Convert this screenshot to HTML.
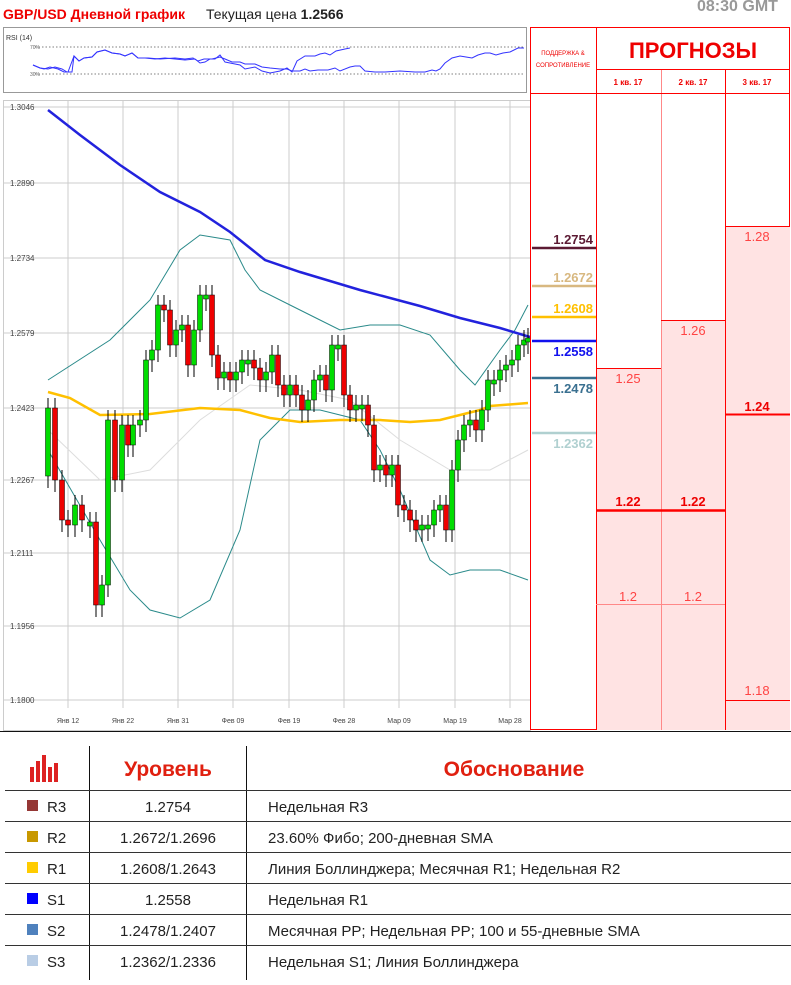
<!DOCTYPE html>
<html><head><meta charset="utf-8"><style>
body{margin:0;width:791px;height:985px;background:#fff;font-family:"Liberation Sans",sans-serif;position:relative;overflow:hidden}
.a{position:absolute}
.gl{font-size:8px;color:#555}
.rp{position:absolute;border:1px solid #f00;box-sizing:border-box}
td{border-bottom:1px solid #222;}
</style></head><body>
<div class="a" style="left:3px;top:6px;font-size:14px;font-weight:bold;color:#e00">GBP/USD Дневной график</div>
<div class="a" style="left:206px;top:6px;font-size:14px;color:#222">Текущая цена <b>1.2566</b></div>
<div class="a" style="left:697px;top:-2px;font-size:16px;font-weight:bold;color:#999">08:30 GMT</div>

<svg class="a" style="left:0;top:0" width="791" height="985">
<!-- RSI box -->
<rect x="3.5" y="27.5" width="523" height="65" fill="#fff" stroke="#999"/>
<text x="6" y="40" font-size="7" fill="#333">RSI (14)</text>
<line x1="35" y1="47" x2="524" y2="47" stroke="#555" stroke-dasharray="1.5,2" stroke-width="0.7"/>
<line x1="35" y1="74" x2="524" y2="74" stroke="#555" stroke-dasharray="1.5,2" stroke-width="0.7"/>
<text x="30" y="49" font-size="5" fill="#666">70%</text><text x="30" y="76" font-size="5" fill="#666">30%</text>
<polyline fill="none" stroke="#33f" stroke-width="1" points="33,65 40,68 48,69 55,67 62,69 67,72 72,72 74,56 79,61 84,58 92,57 97,52 105,50 112,53 120,54 125,56 132,53 138,58 145,58 155,59 165,58 175,59 185,60 195,59 200,63 205,62 210,59 215,59 220,55 225,62 230,63 240,65 245,69 255,67 262,71 270,73 280,71 287,68 292,72 297,61 305,56 315,56 320,54 325,53 330,55 336,51 345,49 350,48"/>
<polyline fill="none" stroke="#33f" stroke-width="1" points="33,65 40,68 48,69 55,67 62,69 67,72 72,72 74,56 79,61 84,58 92,57 97,52 105,50 112,53 120,54 125,56 132,53 138,58 145,58 155,59 165,58 175,59 185,60 195,59 200,63 205,62 210,59 215,59 220,55 225,62 230,63 240,65 245,69 255,67 262,71 270,73 280,71 287,68 292,72 297,61 305,56 315,56 320,54 325,53 330,55 336,51 345,49 350,48" transform="translate(0,0)" opacity="0"/>
<polyline fill="none" stroke="#33f" stroke-width="1" points="33,65 40,68 44,69 50,67 58,69 64,72 68,72 74,56 79,61 84,58 92,57 97,52 105,50 112,53 120,54 125,56 132,53 138,58 148,58 160,59 175,58 185,59 193,58 198,61 204,59 212,59 220,57 225,59 232,62 240,62 245,64 255,64 262,67 270,68 280,69 287,69 292,71 300,71 305,69 310,71 318,70 328,70 335,68 340,71 350,67 355,66 360,66 365,71 375,72 385,72 400,71 415,72 425,72 432,70 436,71 440,69 445,63 452,58 460,56 466,57 472,58 478,55 485,53 490,53 496,55 503,53 510,52 518,48 524,48"/>
<!-- chart area -->
<rect x="3.5" y="100.5" width="527" height="630" fill="#fff" stroke="#ccc"/>
<g stroke="#ccc" stroke-width="1">
<line x1="4" y1="107" x2="530" y2="107"/><line x1="4" y1="183" x2="530" y2="183"/><line x1="4" y1="258" x2="530" y2="258"/><line x1="4" y1="333" x2="530" y2="333"/><line x1="4" y1="408" x2="530" y2="408"/><line x1="4" y1="480" x2="530" y2="480"/><line x1="4" y1="553" x2="530" y2="553"/><line x1="4" y1="626" x2="530" y2="626"/><line x1="4" y1="700" x2="530" y2="700"/>
<line x1="68" y1="101" x2="68" y2="708"/><line x1="123" y1="101" x2="123" y2="708"/><line x1="178" y1="101" x2="178" y2="708"/><line x1="233" y1="101" x2="233" y2="708"/><line x1="289" y1="101" x2="289" y2="708"/><line x1="344" y1="101" x2="344" y2="708"/><line x1="399" y1="101" x2="399" y2="708"/><line x1="455" y1="101" x2="455" y2="708"/><line x1="510" y1="101" x2="510" y2="708"/>
</g>
<g font-size="8" fill="#444">
<text x="10" y="110">1.3046</text><text x="10" y="186">1.2890</text><text x="10" y="261">1.2734</text><text x="10" y="336">1.2579</text><text x="10" y="411">1.2423</text><text x="10" y="483">1.2267</text><text x="10" y="556">1.2111</text><text x="10" y="629">1.1956</text><text x="10" y="703">1.1800</text>
</g>
<g font-size="7" fill="#444" text-anchor="middle">
<text x="68" y="723">Янв 12</text><text x="123" y="723">Янв 22</text><text x="178" y="723">Янв 31</text><text x="233" y="723">Фев 09</text><text x="289" y="723">Фев 19</text><text x="344" y="723">Фев 28</text><text x="399" y="723">Мар 09</text><text x="455" y="723">Мар 19</text><text x="510" y="723">Мар 28</text>
</g>
<polyline fill="none" stroke="#ddd" stroke-width="1" points="48,430 100,480 150,470 200,420 250,385 300,390 350,400 400,440 450,470 490,470 528,450"/>
<polyline fill="none" stroke="#2a8a8a" stroke-width="1" points="48,380 110,340 150,300 180,250 200,235 230,240 245,270 260,290 290,305 320,320 340,330 370,325 400,325 430,335 460,370 475,385 500,350 515,330 528,305"/>
<polyline fill="none" stroke="#2a8a8a" stroke-width="1" points="48,450 100,540 130,590 150,610 180,618 210,600 240,530 260,440 290,410 320,410 360,420 380,450 400,490 430,560 450,575 470,570 500,570 528,580"/>
<polyline fill="none" stroke="#ffc000" stroke-width="2.5" points="48,392 70,398 100,415 150,414 200,408 240,410 270,418 300,422 340,420 380,420 410,422 440,420 460,415 480,410 490,406 528,403"/>
<polyline fill="none" stroke="#2222dd" stroke-width="2.5" points="48,110 80,135 120,165 160,192 200,212 230,232 265,260 300,272 360,290 420,306 460,318 500,328 530,337"/>
<g id="cd"></g>
<!-- right panel lines -->
<rect x="530.5" y="27.5" width="259" height="702" fill="none" stroke="#f00"/>
<rect x="596" y="368" width="65" height="362" fill="#ffe3e3"/>
<rect x="661" y="320" width="64" height="410" fill="#ffe3e3"/>
<rect x="725" y="226" width="65" height="504" fill="#ffe3e3"/>
<g stroke="#f00" stroke-width="1">
<line x1="596.5" y1="27" x2="596.5" y2="730"/><line x1="661.5" y1="70" x2="661.5" y2="730" stroke="#f88"/><line x1="725.5" y1="70" x2="725.5" y2="730"/>
<line x1="530" y1="93.5" x2="790" y2="93.5"/><line x1="596" y1="69.5" x2="790" y2="69.5"/>
<line x1="596" y1="368.5" x2="661" y2="368.5"/><line x1="661" y1="320.5" x2="725" y2="320.5"/><line x1="725" y1="226.5" x2="790" y2="226.5"/>
<line x1="596" y1="604.5" x2="725" y2="604.5" stroke="#f88"/><line x1="725" y1="700.5" x2="790" y2="700.5"/>
<line x1="596" y1="510.5" x2="725" y2="510.5" stroke-width="2.5"/><line x1="725" y1="414.5" x2="790" y2="414.5" stroke-width="2"/>
</g>
<g stroke-width="2.5">
<line x1="532" y1="248" x2="596" y2="248" stroke="#5c1a33"/>
<line x1="532" y1="286" x2="596" y2="286" stroke="#d8b880"/>
<line x1="532" y1="317" x2="596" y2="317" stroke="#ffc000"/>
<line x1="532" y1="341" x2="596" y2="341" stroke="#1111ee"/>
<line x1="532" y1="378" x2="596" y2="378" stroke="#3a7090"/>
<line x1="532" y1="433" x2="596" y2="433" stroke="#b0d0d0"/>
</g>
<g font-size="13" font-weight="bold" text-anchor="end">
<text x="593" y="244" fill="#5c1a33">1.2754</text>
<text x="593" y="282" fill="#d8b880">1.2672</text>
<text x="593" y="313" fill="#ffc000">1.2608</text>
<text x="593" y="356" fill="#1111ee">1.2558</text>
<text x="593" y="393" fill="#3a7090">1.2478</text>
<text x="593" y="448" fill="#b0d0d0">1.2362</text>
</g>
<g font-size="13" text-anchor="middle" fill="#f44">
<text x="628" y="383">1.25</text><text x="693" y="335">1.26</text><text x="757" y="241">1.28</text>
<text x="628" y="601">1.2</text><text x="693" y="601">1.2</text><text x="757" y="695">1.18</text>
</g>
<g font-size="13" font-weight="bold" text-anchor="middle" fill="#e00">
<text x="628" y="506">1.22</text><text x="693" y="506">1.22</text><text x="757" y="411">1.24</text>
</g>
<text x="563" y="55" font-size="6" fill="#e00" text-anchor="middle">ПОДДЕРЖКА &amp;</text>
<text x="563" y="67" font-size="6" fill="#e00" text-anchor="middle">СОПРОТИВЛЕНИЕ</text>
<text x="693" y="58" font-size="22" font-weight="bold" fill="#e00" text-anchor="middle">ПРОГНОЗЫ</text>
<g font-size="8" font-weight="bold" fill="#e00" text-anchor="middle"><text x="628" y="85">1 кв. 17</text><text x="693" y="85">2 кв. 17</text><text x="757" y="85">3 кв. 17</text></g>
<!-- table -->
<line x1="0" y1="731.5" x2="791" y2="731.5" stroke="#111"/>
<line x1="89.5" y1="746" x2="89.5" y2="980" stroke="#111"/><line x1="246.5" y1="746" x2="246.5" y2="980" stroke="#111"/>
<g stroke="#333"><line x1="5" y1="790.5" x2="791" y2="790.5"/><line x1="5" y1="821.5" x2="791" y2="821.5"/><line x1="5" y1="852.5" x2="791" y2="852.5"/><line x1="5" y1="883.5" x2="791" y2="883.5"/><line x1="5" y1="914.5" x2="791" y2="914.5"/><line x1="5" y1="945.5" x2="791" y2="945.5"/></g>
<g fill="#d22"><rect x="30" y="767" width="4" height="15"/><rect x="36" y="761" width="4" height="21"/><rect x="42" y="755" width="4" height="27"/><rect x="48" y="767" width="4" height="15"/><rect x="54" y="763" width="4" height="19"/></g>
<text x="168" y="776" font-size="21" font-weight="bold" fill="#e02010" text-anchor="middle">Уровень</text>
<text x="514" y="776" font-size="21" font-weight="bold" fill="#e02010" text-anchor="middle">Обоснование</text>
<rect x="27" y="800" width="11" height="11" fill="#953735"/><rect x="27" y="831" width="11" height="11" fill="#c89800"/><rect x="27" y="862" width="11" height="11" fill="#ffcc00"/><rect x="27" y="893" width="11" height="11" fill="#0000ff"/><rect x="27" y="924" width="11" height="11" fill="#4f81bd"/><rect x="27" y="955" width="11" height="11" fill="#b9cde5"/>
<g font-size="15" fill="#222"><text x="47" y="812">R3</text><text x="47" y="843">R2</text><text x="47" y="874">R1</text><text x="47" y="905">S1</text><text x="47" y="936">S2</text><text x="47" y="967">S3</text></g>
<g font-size="15" fill="#222" text-anchor="middle"><text x="168" y="812">1.2754</text><text x="168" y="843">1.2672/1.2696</text><text x="168" y="874">1.2608/1.2643</text><text x="168" y="905">1.2558</text><text x="168" y="936">1.2478/1.2407</text><text x="168" y="967">1.2362/1.2336</text></g>
<g font-size="15" fill="#222"><text x="268" y="812">Недельная R3</text><text x="268" y="843">23.60% Фибо; 200-дневная SMA</text><text x="268" y="874">Линия Боллинджера; Месячная R1; Недельная R2</text><text x="268" y="905">Недельная R1</text><text x="268" y="936">Месячная PP; Недельная PP; 100 и 55-дневные SMA</text><text x="268" y="967">Недельная S1; Линия Боллинджера</text></g>
</svg>
<script>
var c=[[48,408],[55,480],[62,520],[68,525],[75,505],[82,520],[90,522],[96,605],[102,585],[108,420],[115,480],[122,425],[128,445],[133,425],[140,420],[146,360],[152,350],[158,305],[164,310],[170,345],[176,330],[182,325],[188,365],[194,330],[200,295],[206,295],[212,355],[218,378],[224,372],[230,380],[236,372],[242,360],[248,360],[254,368],[260,380],[266,372],[272,355],[278,385],[284,395],[290,385],[296,395],[302,410],[308,400],[314,380],[320,375],[326,390],[332,345],[338,345],[344,395],[350,410],[356,405],[362,405],[368,425],[374,470],[380,465],[386,475],[392,465],[398,505],[404,510],[410,520],[416,530],[422,525],[428,525],[434,510],[440,505],[446,530],[452,470],[458,440],[464,425],[470,420],[476,430],[482,410],[488,380],[494,380],[500,370],[506,365],[512,360],[518,345],[524,340],[528,338]];
var s='',p=c[0][1]-2;
for(var i=0;i<c.length;i++){var x=c[i][0],cl=c[i][1],o=(i==0?p+70:c[i-1][1]);if(Math.abs(o-cl)<3)o=cl+4;var t=Math.min(o,cl),b=Math.max(o,cl);var col=cl<o?'#00dd00':'#ee0000';
s+='<line x1="'+x+'" y1="'+(t-10)+'" x2="'+x+'" y2="'+(b+12)+'" stroke="#000" stroke-width="1"/><rect x="'+(x-2.5)+'" y="'+t+'" width="5" height="'+(b-t)+'" fill="'+col+'" stroke="#000" stroke-width="0.5"/>';}
document.getElementById('cd').innerHTML=s;
</script>
</body></html>
